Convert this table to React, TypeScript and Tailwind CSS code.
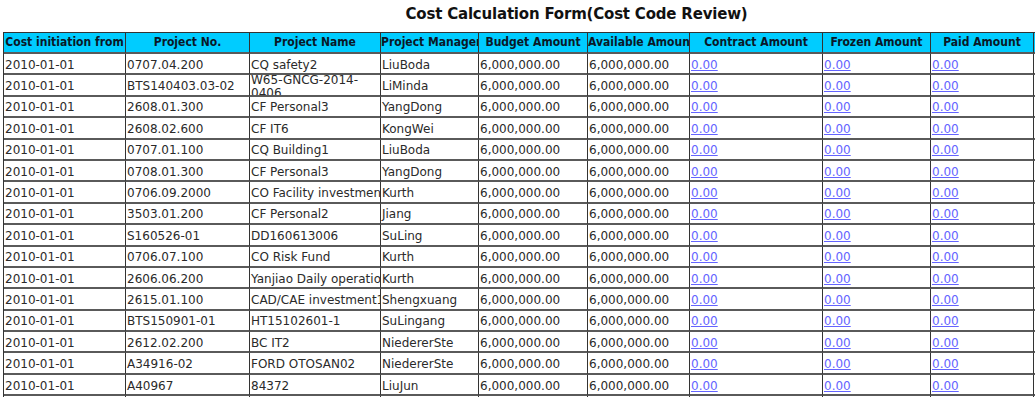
import type { ReactNode } from 'react'

const columns = [
  { title: 'Cost initiation from', width: 'w-[122px]' },
  { title: 'Project No.', width: 'w-[124px]' },
  { title: 'Project Name', width: 'w-[131px]' },
  { title: 'Project Manager', width: 'w-[98px]' },
  { title: 'Budget Amount', width: 'w-[109px]' },
  { title: 'Available Amount', width: 'w-[102px]' },
  { title: 'Contract Amount', width: 'w-[133px]' },
  { title: 'Frozen Amount', width: 'w-[108px]' },
  { title: 'Paid Amount', width: 'w-[103px]' },
  { title: 'Operation', width: 'w-[120px]' },
]

const rows: [string, ReactNode, string][] = [
  ['0707.04.200', 'CQ safety2', 'LiuBoda'],
  ['BTS140403.03-02', <>W65-GNCG-2014-<br />0406</>, 'LiMinda'],
  ['2608.01.300', 'CF Personal3', 'YangDong'],
  ['2608.02.600', 'CF IT6', 'KongWei'],
  ['0707.01.100', 'CQ Building1', 'LiuBoda'],
  ['0708.01.300', 'CF Personal3', 'YangDong'],
  ['0706.09.2000', 'CO Facility investment', 'Kurth'],
  ['3503.01.200', 'CF Personal2', 'Jiang'],
  ['S160526-01', 'DD160613006', 'SuLing'],
  ['0706.07.100', 'CO Risk Fund', 'Kurth'],
  ['2606.06.200', 'Yanjiao Daily operation', 'Kurth'],
  ['2615.01.100', 'CAD/CAE investment1', 'Shengxuang'],
  ['BTS150901-01', 'HT15102601-1', 'SuLingang'],
  ['2612.02.200', 'BC IT2', 'NiedererSte'],
  ['A34916-02', 'FORD OTOSAN02', 'NiedererSte'],
  ['A40967', '84372', 'LiuJun'],
  ['A40968', '84373', 'LiuJun'],
]

const cell = 'shrink-0 overflow-hidden border-r border-b-2 border-r-[#333] border-b-[#5a5a5a]'
const body = `${cell} flex items-center whitespace-nowrap pl-[1px] pt-[3px]`

export default function App() {
  return (
    <div
      className="h-[397px] w-[1035px] overflow-hidden bg-white"
      style={{ fontFamily: '"DejaVu Sans", Verdana, sans-serif' }}
    >
      <div className="w-[1150px] pl-[3px]">
        {/* Title */}
        <h1 className="h-[32px] pt-[3px] text-center text-[15px] font-bold leading-[22px] tracking-[-0.2px] text-[#111]">
          Cost Calculation Form(Cost Code Review)
        </h1>

        <div className="border-l border-t border-[#333]">
          {/* Header */}
          <div
            className="flex h-[21px] bg-[#00ccff]"
            style={{ fontFamily: '"DejaVu Sans Condensed", "DejaVu Sans", sans-serif' }}
          >
            {columns.map((col) => (
              <div
                key={col.title}
                className={`${cell} ${col.width} whitespace-nowrap text-center text-[12px] font-bold leading-[19px] text-[#0a1828]`}
              >
                {col.title}
              </div>
            ))}
          </div>

          {/* Rows */}
          {rows.map(([no, name, manager], i) => (
            <div key={i} className="flex h-[21.4px] text-[12px] leading-[13px] text-[#2a2a2a]">
              <div className={`${body} w-[122px]`}>2010-01-01</div>
              <div className={`${body} w-[124px]`}>{no}</div>
              <div className={`${body} w-[131px]`}>
                <span>{name}</span>
              </div>
              <div className={`${body} w-[98px]`}>{manager}</div>
              <div className={`${body} w-[109px]`}>6,000,000.00</div>
              <div className={`${body} w-[102px]`}>6,000,000.00</div>
              <div className={`${body} w-[133px]`}>
                <a href="#" className="text-[#6464ff] underline">0.00</a>
              </div>
              <div className={`${body} w-[108px]`}>
                <a href="#" className="text-[#6464ff] underline">0.00</a>
              </div>
              <div className={`${body} w-[103px]`}>
                <a href="#" className="text-[#6464ff] underline">0.00</a>
              </div>
              <div className={`${body} w-[120px] pl-[2px]`}>
                <a href="#" className="text-[#b07a2a] underline">Detail</a>
              </div>
            </div>
          ))}
        </div>
      </div>
    </div>
  )
}
